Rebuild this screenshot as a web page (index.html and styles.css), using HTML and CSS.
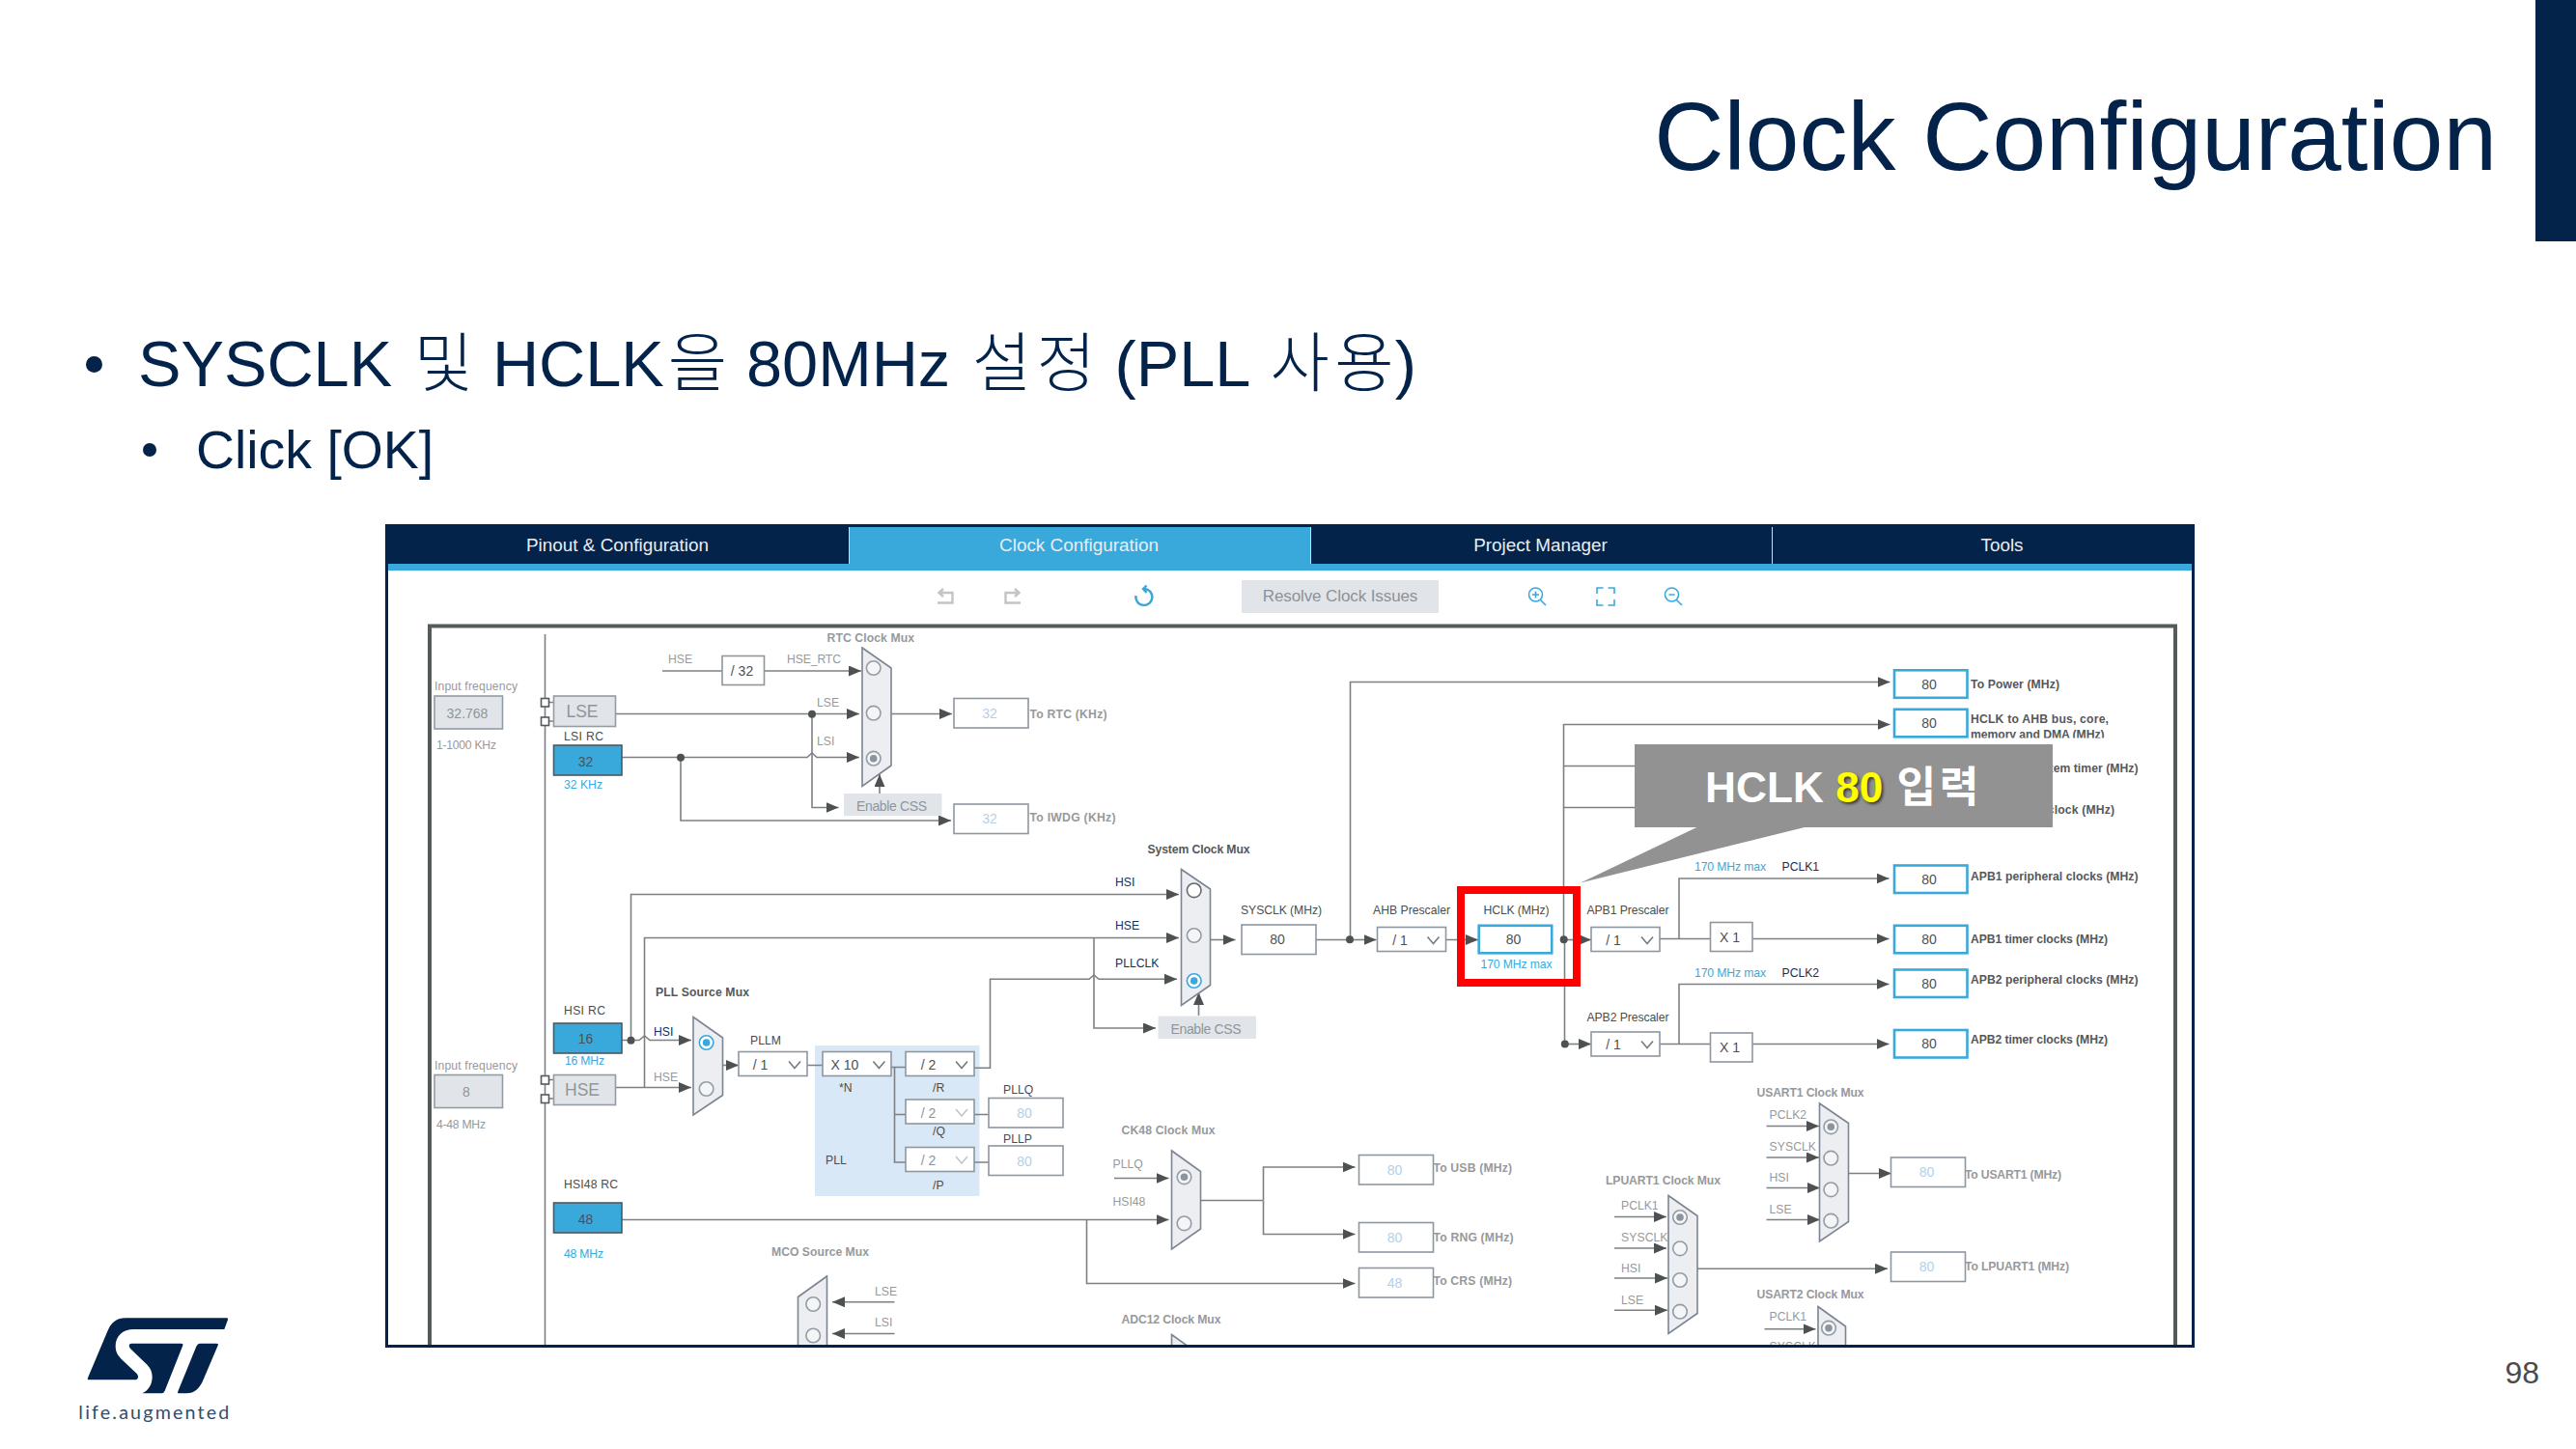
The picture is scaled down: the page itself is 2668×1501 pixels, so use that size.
FILE: index.html
```html
<!DOCTYPE html>
<html lang="ko">
<head>
    <meta charset="UTF-8">
    <meta name="viewport" content="width=device-width, initial-scale=1.0">
    <title>Clock Configuration</title>
    <link rel="stylesheet" href="styles.css">
</head>
<body>
    <header class="slide-header">
        <h1>Clock Configuration</h1>
        <div class="accent"></div>
    </header>

    <ul class="bullets">
        <li class="level1"><p>SYSCLK <span class="ko">및</span> HCLK<span class="ko">을</span> 80MHz <span class="ko">설정</span> (PLL <span class="ko">사용</span>)</p></li>
        <li class="level2"><p>Click [OK]</p></li>
    </ul>

    <main class="stage">
        <svg class="logo" viewBox="0 0 600 450">
            <path d="M93 259 L155 112 Q171 73 210 73 H525 Q530 73 528 78 L517 108 H236 C200 108 179 130 179 160 C179 182 188 192 203 206 L246 247 Q254 259 243 265 H97 Q90 265 93 259 Z"/>
            <path d="M228 152 H383 Q390 152 388 158 L332 299 Q329 307 321 307 H262 C282 298 293 279 293 256 C293 236 285 225 271 212 L225 168 Q216 154 228 152 Z"/>
            <path d="M441 152 H493 Q500 152 497 158 L452 264 C440 293 424 307 400 307 H376 Q370 307 373 301 L430 161 Q434 152 441 152 Z"/>
            <text x="64" y="387" textLength="468">life.augmented</text>
        </svg>

        <section class="panel">
            <nav class="tabs">
                <div class="tab">Pinout &amp; Configuration</div>
                <div class="tab active">Clock Configuration</div>
                <div class="tab">Project Manager</div>
                <div class="tab">Tools</div>
            </nav>

            <div class="toolbar">
                <svg class="icon undo" viewBox="0 0 20 20"><path d="M2 16.5H17.5V6H4M8 2L3.5 6L8 10"/></svg>
                <svg class="icon redo" viewBox="0 0 20 20"><path d="M18 16.5H2.5V6H16M12 2L16.5 6L12 10"/></svg>
                <svg class="icon refresh" viewBox="0 0 20 20"><path d="M9 2A8.5 8.5 0 1 1 1.5 9M12.5 -1.5L9 2L12.5 6"/></svg>
                <button class="resolve">Resolve Clock Issues</button>
                <svg class="icon zoom-in" viewBox="0 0 20 20"><circle cx="8.5" cy="8" r="7"/><path d="M13.5 13.5L19 19M5 8H12M8.5 4.5V11.5"/></svg>
                <svg class="icon fit" viewBox="0 0 20 20"><path d="M1 7V1H7.500M12.500 1H19V7M19 13V19H12.500M7.500 19H1V13"/></svg>
                <svg class="icon zoom-out" viewBox="0 0 20 20"><circle cx="8.500" cy="8" r="7"/><path d="M13.500 13.500L19 19M5.500 8H11.500"/></svg>
            </div>

            <svg class="clock-tree" viewBox="402 640 1868 753">
                <defs>
                    <marker id="arrow" viewBox="0 0 13 11" refX="13" refY="5.500" markerWidth="13" markerHeight="11" markerUnits="userSpaceOnUse" orient="auto">
                        <path class="head" d="M0 0L13 5.500L0 11Z"/>
                    </marker>
                    <g id="radio"><circle r="7.300"/></g>
                    <g id="radio-on"><circle r="7.300"/><circle class="core" r="3.800"/></g>
                    <path id="chevron" d="M-6 -3.500L0 3.500L6 -3.500"/>
                    <rect id="out" width="77" height="30.500"/>
                    <rect id="select" width="71" height="25"/>
                    <clipPath id="two-lines"><rect x="2038" y="730" width="160" height="34.500"/></clipPath>
                </defs>

                <path class="frame" d="M445 1400V648.500H2253V1400"/>
                <rect class="pll" x="844" y="1083" width="170.500" height="156"/>

                <!-- wires -->
                <g class="wire">
                    <path d="M564.500 657V1393M564 727.500H573M564 747H573M564 1118.500H573M564 1138H573"/>
                    <path d="M686 695H748M835.500 1103.500H852M922.500 1105.500H938M926.500 1105.500V1204H938M926.500 1154.500H938M1009 1154.500H1024M1009 1204H1024"/>
                    <path d="M1718.500 972.500H1771.500M1718.500 1081.500H1771.500M1363 973.500H1398M1243.500 1243.500H1308"/>
                    <path d="M1619.500 750V973M1620.500 973V1081M1619.500 793.500H1700M1619.500 836.500H1700"/>
                </g>
                <g class="wire ends">
                    <path d="M791.500 695H892"/>
                    <path d="M638 739.500H890"/>
                    <path d="M644 784.500H836L841 780L846 784.500H890"/>
                    <path d="M705 784.500V850H985"/>
                    <path d="M841 739.500V836.500H868.500"/>
                    <path d="M911 822V802"/>
                    <path d="M923 739.500H986"/>
                    <path d="M653.500 1077.500V926.500H1221"/>
                    <path d="M667.500 1126.500V971.500H1221"/>
                    <path d="M644 1077.500H662L667.500 1073L673 1077.500H716"/>
                    <path d="M638 1126.500H716"/>
                    <path d="M748.500 1103.500H765"/>
                    <path d="M1009 1106.300H1025.500V1014.300H1128L1133 1010L1138 1014.300H1219"/>
                    <path d="M1133 971.500V1065H1197"/>
                    <path d="M1241.500 1052V1028"/>
                    <path d="M1253.500 973.500H1279.500"/>
                    <path d="M1398 973.500H1425.500"/>
                    <path d="M1398.500 973.500V706.500H1957.500"/>
                    <path d="M1497.500 973.500H1531"/>
                    <path d="M1619.500 750.500H1957.500"/>
                    <path d="M1619.500 973.500H1648"/>
                    <path d="M1620.500 1081.500H1648"/>
                    <path d="M1739 972.500V910H1956.500"/>
                    <path d="M1815 972.500H1956.500"/>
                    <path d="M1739 1081.500V1019.500H1956.500"/>
                    <path d="M1815 1081.500H1956.500"/>
                    <path d="M644 1263.500H1210.500"/>
                    <path d="M1125.500 1263.500V1329.500H1403.500"/>
                    <path d="M1154 1220.500H1210.500"/>
                    <path d="M1308.500 1243.500V1209H1403.500"/>
                    <path d="M1308.500 1243.500V1278.500H1403.500"/>
                    <path d="M926.500 1348.700H862"/>
                    <path d="M926.500 1381.500H862"/>
                    <path d="M1829.500 1166.500H1884"/>
                    <path d="M1829.500 1199H1884"/>
                    <path d="M1829.500 1230.500H1885"/>
                    <path d="M1829.500 1263.500H1885"/>
                    <path d="M1914.500 1215.500H1959"/>
                    <path d="M1672 1260.500H1726"/>
                    <path d="M1672 1293H1726"/>
                    <path d="M1672 1324H1727"/>
                    <path d="M1672 1357.300H1727"/>
                    <path d="M1758 1314.300H1955"/>
                    <path d="M1827.500 1376.700H1880.500"/>
                </g>
                <g class="dot">
                    <circle cx="841" cy="739.700" r="4"/>
                    <circle cx="705" cy="784.700" r="4"/>
                    <circle cx="653.500" cy="1077.700" r="4"/>
                    <circle cx="1398" cy="973.300" r="4"/>
                    <circle cx="1619.700" cy="973.300" r="4"/>
                    <circle cx="1620.800" cy="1081.600" r="4"/>
                </g>

                <!-- multiplexers -->
                <g class="mux">
                    <path d="M893 671L923 692V793L893 814.500Z"/>
                    <path d="M718 1053.500L748.500 1075V1134.500L718 1155Z"/>
                    <path d="M1223.500 900.500L1253.500 921V1020.500L1223.500 1041.500Z"/>
                    <path d="M1213.500 1192L1243.500 1213.500V1273L1213.500 1294Z"/>
                    <path d="M856.500 1322L826.500 1343.500V1400H856.500Z"/>
                    <path d="M1213.500 1382.500L1243.500 1404H1213.500Z"/>
                    <path d="M1884.500 1143L1914.500 1163.500V1265.500L1884.500 1286Z"/>
                    <path d="M1728 1238.500L1758 1259.500V1360.500L1728 1381.500Z"/>
                    <path d="M1883 1353.500L1911.500 1374V1400H1883Z"/>
                </g>
                <g class="radio">
                    <use href="#radio" x="904.700" y="692"/>
                    <use href="#radio" x="904.700" y="738.700"/>
                    <use href="#radio-on" x="904.700" y="785.700"/>
                    <use href="#radio-on" x="731.600" y="1080" class="picked"/>
                    <use href="#radio" x="731.600" y="1128"/>
                    <use href="#radio" x="1236.700" y="922.300" class="open"/>
                    <use href="#radio" x="1236.700" y="969"/>
                    <use href="#radio-on" x="1236.700" y="1016" class="picked"/>
                    <use href="#radio-on" x="1226.500" y="1219.300"/>
                    <use href="#radio" x="1226.500" y="1267.300"/>
                    <use href="#radio" x="842.200" y="1351"/>
                    <use href="#radio" x="842.200" y="1383.500"/>
                    <use href="#radio-on" x="1896.300" y="1167.300"/>
                    <use href="#radio" x="1896.300" y="1199.700"/>
                    <use href="#radio" x="1896.300" y="1232.300"/>
                    <use href="#radio" x="1896.300" y="1264.700"/>
                    <use href="#radio-on" x="1740" y="1261"/>
                    <use href="#radio" x="1740" y="1293.300"/>
                    <use href="#radio" x="1740" y="1326"/>
                    <use href="#radio" x="1740" y="1358.700"/>
                    <use href="#radio-on" x="1894" y="1375.700"/>
                </g>

                <!-- sources -->
                <g class="grey-box">
                    <rect x="450" y="721" width="70.500" height="34"/>
                    <rect x="573.500" y="721" width="64" height="31.500"/>
                    <rect x="450" y="1113.500" width="70.500" height="34"/>
                    <rect x="573.500" y="1113.500" width="64" height="31"/>
                </g>
                <g class="css-button">
                    <rect x="874" y="822" width="101.500" height="23"/>
                    <rect x="1199.500" y="1052.500" width="101.500" height="23.500"/>
                </g>
                <g class="source">
                    <rect x="573.500" y="772" width="70.500" height="31"/>
                    <rect x="573.500" y="1060" width="70.500" height="31"/>
                    <rect x="573.500" y="1246" width="70.500" height="31"/>
                </g>
                <g class="pin">
                    <rect x="560.500" y="723.500" width="8" height="8.500"/>
                    <rect x="560.500" y="743" width="8" height="8.500"/>
                    <rect x="560.500" y="1114.500" width="8" height="8.500"/>
                    <rect x="560.500" y="1134" width="8" height="8.500"/>
                </g>

                <!-- value boxes and prescalers -->
                <g class="box">
                    <rect x="748" y="679.500" width="43.500" height="30"/>
                    <rect x="1771.500" y="955.500" width="43.500" height="30"/>
                    <rect x="1771.500" y="1070" width="43.500" height="30"/>
                    <use href="#out" x="988" y="723.500"/>
                    <use href="#out" x="988" y="833"/>
                    <use href="#out" x="1286" y="958"/>
                    <use href="#out" x="1024" y="1137.500"/>
                    <use href="#out" x="1024" y="1187"/>
                    <use href="#out" x="1407.500" y="1196.500"/>
                    <use href="#out" x="1407.500" y="1266.500"/>
                    <use href="#out" x="1407.500" y="1313.500"/>
                    <use href="#out" x="1958.500" y="1199"/>
                    <use href="#out" x="1958.500" y="1297"/>
                    <use href="#select" x="765" y="1089.500"/>
                    <use href="#select" x="852" y="1089.500"/>
                    <use href="#select" x="938" y="1089.500"/>
                    <use href="#select" x="938" y="1139"/>
                    <use href="#select" x="938" y="1188.500"/>
                    <use href="#select" x="1426.500" y="960.500"/>
                    <use href="#select" x="1648" y="960.500"/>
                    <use href="#select" x="1648" y="1069"/>
                </g>
                <g class="box live">
                    <rect x="1962" y="694.300" width="75.500" height="28.500"/>
                    <rect x="1962" y="734.800" width="75.500" height="28.500"/>
                    <rect x="1962" y="896.500" width="75.500" height="28.500"/>
                    <rect x="1962" y="958.800" width="75.500" height="28.500"/>
                    <rect x="1962" y="1004.500" width="75.500" height="28.500"/>
                    <rect x="1962" y="1067" width="75.500" height="28.500"/>
                    <rect x="1531.700" y="958.800" width="75.500" height="28.500"/>
                </g>
                <g class="chevron">
                    <use href="#chevron" x="823" y="1103"/>
                    <use href="#chevron" x="910.400" y="1103"/>
                    <use href="#chevron" x="996" y="1103"/>
                    <use href="#chevron" x="996" y="1152.500" class="off"/>
                    <use href="#chevron" x="996" y="1201.500" class="off"/>
                    <use href="#chevron" x="1484.500" y="974"/>
                    <use href="#chevron" x="1706" y="974"/>
                    <use href="#chevron" x="1706" y="1082"/>
                </g>

                <g class="value">
                    <text x="768.500" y="699.500">/ 32</text>
                    <text x="787.500" y="1108">/ 1</text>
                    <text x="875" y="1108">X 10</text>
                    <text x="961.500" y="1108">/ 2</text>
                    <text x="961.500" y="1158" class="off">/ 2</text>
                    <text x="961.500" y="1207.300" class="off">/ 2</text>
                    <text x="1450" y="979">/ 1</text>
                    <text x="1671" y="979">/ 1</text>
                    <text x="1671" y="1087.300">/ 1</text>
                    <text x="1791.500" y="975.500">X 1</text>
                    <text x="1791.500" y="1090">X 1</text>
                    <text x="606.500" y="793.500">32</text>
                    <text x="606.500" y="1081.300">16</text>
                    <text x="606.500" y="1267.500">48</text>
                    <text x="1323" y="978.300">80</text>
                    <text x="1567.500" y="978.300">80</text>
                    <text x="1998" y="713.700">80</text>
                    <text x="1998" y="754">80</text>
                    <text x="1998" y="915.700">80</text>
                    <text x="1998" y="978.300">80</text>
                    <text x="1998" y="1023.700">80</text>
                    <text x="1998" y="1086.300">80</text>
                </g>
                <g class="value grey">
                    <text x="484" y="744">32.768</text>
                    <text x="483" y="1135.700">8</text>
                    <text x="923.500" y="839.700" textLength="73">Enable CSS</text>
                    <text x="1249" y="1071" textLength="73">Enable CSS</text>
                    <text x="603" y="742.700" class="osc">LSE</text>
                    <text x="603" y="1135" class="osc">HSE</text>
                </g>
                <g class="value faint">
                    <text x="1025" y="743.700">32</text>
                    <text x="1025" y="853">32</text>
                    <text x="1061" y="1158">80</text>
                    <text x="1061" y="1207.500">80</text>
                    <text x="1444.500" y="1217">80</text>
                    <text x="1444.500" y="1287">80</text>
                    <text x="1444.500" y="1334">48</text>
                    <text x="1995.500" y="1219">80</text>
                    <text x="1995.500" y="1317">80</text>
                </g>

                <!-- labels -->
                <g class="label grey">
                    <text x="450" y="715" textLength="86">Input frequency</text>
                    <text x="452" y="776.300" textLength="62">1-1000 KHz</text>
                    <text x="450" y="1107.500" textLength="86">Input frequency</text>
                    <text x="452" y="1168.700" textLength="51">4-48 MHz</text>
                    <text x="692" y="686.500">HSE</text>
                    <text x="815" y="686.500" textLength="56">HSE_RTC</text>
                    <text x="846" y="732">LSE</text>
                    <text x="846" y="772.300">LSI</text>
                    <text x="677" y="1120">HSE</text>
                    <text x="906" y="1341.700">LSE</text>
                    <text x="906" y="1374.300">LSI</text>
                    <text x="1152.500" y="1209.500">PLLQ</text>
                    <text x="1152.500" y="1249">HSI48</text>
                    <text x="1832.500" y="1159.300">PCLK2</text>
                    <text x="1832.500" y="1192" textLength="48.500">SYSCLK</text>
                    <text x="1832.500" y="1224.300">HSI</text>
                    <text x="1832.500" y="1257">LSE</text>
                    <text x="1679" y="1253.300">PCLK1</text>
                    <text x="1679" y="1286" textLength="48.500">SYSCLK</text>
                    <text x="1679" y="1318.300">HSI</text>
                    <text x="1679" y="1351">LSE</text>
                    <text x="1832.500" y="1368">PCLK1</text>
                    <text x="1832.500" y="1399" textLength="48.500">SYSCLK</text>
                </g>
                <g class="label">
                    <text x="584" y="767" textLength="41">LSI RC</text>
                    <text x="584" y="1051.300" textLength="43">HSI RC</text>
                    <text x="584" y="1231" textLength="56">HSI48 RC</text>
                    <text x="777" y="1082.300">PLLM</text>
                    <text x="869" y="1130.700">*N</text>
                    <text x="966" y="1130.700">/R</text>
                    <text x="966" y="1176">/Q</text>
                    <text x="966" y="1232.300">/P</text>
                    <text x="855" y="1206">PLL</text>
                    <text x="1039" y="1133">PLLQ</text>
                    <text x="1039" y="1184">PLLP</text>
                    <text x="1285" y="946.700" textLength="84">SYSCLK (MHz)</text>
                    <text x="1422" y="946.700" textLength="80">AHB Prescaler</text>
                    <text x="1536.500" y="946.700" textLength="68">HCLK (MHz)</text>
                    <text x="1643.500" y="946.700" textLength="85">APB1 Prescaler</text>
                    <text x="1643.500" y="1057.500" textLength="85">APB2 Prescaler</text>
                </g>
                <g class="label navy">
                    <text x="677" y="1073">HSI</text>
                    <text x="1155" y="918">HSI</text>
                    <text x="1155" y="962.700">HSE</text>
                    <text x="1155" y="1001.700" textLength="45.500">PLLCLK</text>
                    <text x="1845.500" y="901.700">PCLK1</text>
                    <text x="1845.500" y="1012.300">PCLK2</text>
                </g>
                <g class="label blue">
                    <text x="584" y="816.500" textLength="40">32 KHz</text>
                    <text x="585" y="1103.300" textLength="41">16 MHz</text>
                    <text x="584" y="1302.500" textLength="41">48 MHz</text>
                    <text x="1533.500" y="1003.300" textLength="74">170 MHz max</text>
                    <text x="1755" y="901.700" textLength="74">170 MHz max</text>
                    <text x="1755" y="1012.300" textLength="74">170 MHz max</text>
                </g>
                <g class="label bold">
                    <text x="679" y="1031.700" textLength="97">PLL Source Mux</text>
                    <text x="1188.500" y="884.300" textLength="106">System Clock Mux</text>
                    <text x="2041" y="712.700" textLength="92">To Power (MHz)</text>
                    <g clip-path="url(#two-lines)">
                        <text x="2041" y="749" textLength="143">HCLK to AHB bus, core,</text>
                        <text x="2041" y="765" textLength="138.500">memory and DMA (MHz)</text>
                    </g>
                    <text x="2041" y="800" textLength="173.500">To Cortex System timer (MHz)</text>
                    <text x="2041" y="843" textLength="149">FCLK Cortex clock (MHz)</text>
                    <text x="2041" y="912" textLength="173.500">APB1 peripheral clocks (MHz)</text>
                    <text x="2041" y="977" textLength="142">APB1 timer clocks (MHz)</text>
                    <text x="2041" y="1019" textLength="173.500">APB2 peripheral clocks (MHz)</text>
                    <text x="2041" y="1081.300" textLength="142">APB2 timer clocks (MHz)</text>
                </g>
                <g class="label bold grey">
                    <text x="856.500" y="665" textLength="90.500">RTC Clock Mux</text>
                    <text x="1066.500" y="744" textLength="80">To RTC (KHz)</text>
                    <text x="1066.500" y="851" textLength="89">To IWDG (KHz)</text>
                    <text x="799" y="1301.300" textLength="101">MCO Source Mux</text>
                    <text x="1161.500" y="1175" textLength="97">CK48 Clock Mux</text>
                    <text x="1161.500" y="1370.700" textLength="103">ADC12 Clock Mux</text>
                    <text x="1484.500" y="1214" textLength="81.500">To USB (MHz)</text>
                    <text x="1484.500" y="1286" textLength="83">To RNG (MHz)</text>
                    <text x="1484.500" y="1331.300" textLength="81.500">To CRS (MHz)</text>
                    <text x="1819.500" y="1135.700" textLength="111">USART1 Clock Mux</text>
                    <text x="1663" y="1227" textLength="119">LPUART1 Clock Mux</text>
                    <text x="1819.500" y="1344.500" textLength="111">USART2 Clock Mux</text>
                    <text x="2035" y="1220.700" textLength="100">To USART1 (MHz)</text>
                    <text x="2035" y="1315.700" textLength="108">To LPUART1 (MHz)</text>
                </g>
            </svg>

            <div class="highlight"></div>
            <div class="callout">
                <p>HCLK <span class="hot">80</span> <span class="ko">입력</span></p>
                <svg class="callout-tail" viewBox="0 0 236 59"><path d="M122.500 0H236L0 58.500Z"/></svg>
            </div>
        </section>

        <div class="page-number">98</div>
    </main>
</body>
</html>
```

FILE: styles.css
```css
body {
    margin: 0;
    width: 2668px;
    height: 1501px;
    display: flex;
    flex-direction: column;
    overflow: hidden;
    background: #ffffff;
    color: #03234b;
    font-family: 'Liberation Sans', 'Noto Sans CJK KR', sans-serif;
}

p {
    margin: 0;
}

.slide-header {
    display: flex;
    justify-content: flex-end;
    gap: 40px;
    height: 250px;
}

.slide-header h1 {
    margin: 84px 0 0;
    font-size: 100px;
    font-weight: 400;
    line-height: 114px;
}

.accent {
    width: 42px;
    background: #03234b;
}

.bullets {
    height: 293px;
    margin: 0;
    padding: 0;
    list-style: none;
}

.bullets li {
    display: flex;
    align-items: center;
    white-space: nowrap;
}

.bullets li::before {
    content: "";
    border-radius: 50%;
    background: #03234b;
}

.level1 {
    height: 90px;
    padding: 82px 0 0 89px;
    font-size: 66.7px;
    line-height: 90px;
}

.level1::before {
    width: 17px;
    height: 17px;
    margin-right: 37px;
}

.level1 .ko {
    padding-left: 4px;
    margin-right: -4px;
    font-weight: 300;
    letter-spacing: 5.3px;
}

.level2 {
    height: 80px;
    padding: 4px 0 0 148px;
    font-size: 55.4px;
    line-height: 80px;
}

.level2::before {
    width: 14px;
    height: 14px;
    margin-right: 41px;
}

.stage {
    display: grid;
    grid-template-columns: 399px 1874px 1fr;
    height: 958px;
}

.logo {
    align-self: end;
    width: 200px;
    height: 150px;
    margin: 0 0 10px 60px;
    fill: #03234b;
}

.logo text {
    font-family: Lato, sans-serif;
    font-size: 59px;
    fill: #334d6e;
}

.page-number {
    align-self: end;
    justify-self: end;
    margin: 0 38px 61px 0;
    color: #4b4b4b;
    font-size: 32px;
    line-height: 36px;
}

.panel {
    position: relative;
    box-sizing: border-box;
    height: 853px;
    border: 3px solid #03234b;
    overflow: hidden;
}

.tabs {
    display: flex;
    height: 38px;
    background: #03234b;
    border-bottom: 7px solid #39a9dc;
}

.tab {
    flex: 0 0 478px;
    box-sizing: border-box;
    padding-right: 2px;
    border-right: 1px solid #d5dbe2;
    color: #e9edf2;
    font-size: 18.9px;
    line-height: 37px;
    text-align: center;
}

.tab.active {
    background: #39a9dc;
}

.toolbar {
    display: flex;
    align-items: center;
    height: 49px;
    padding: 4px 0 0 567px;
    box-sizing: border-box;
}

.icon {
    width: 20px;
    height: 20px;
    fill: none;
    stroke: #39a9dc;
    stroke-width: 1.6;
    overflow: visible;
}

.undo,
.redo {
    stroke: #c4c4c4;
    stroke-width: 2.4;
}

.redo {
    margin-left: 50px;
}

.refresh {
    margin-left: 116px;
    stroke-width: 2.4;
}

.resolve {
    width: 204px;
    height: 34px;
    margin: 0 92px 0 91px;
    padding: 0;
    border: none;
    background: #e1e5e9;
    color: #8d9298;
    font-family: inherit;
    font-size: 17px;
    letter-spacing: -0.1px;
}

.fit {
    margin-left: 51px;
}

.zoom-out {
    margin-left: 50px;
}

.clock-tree {
    display: block;
    width: 1868px;
    height: 753px;
}

.frame {
    fill: none;
    stroke: #555a5a;
    stroke-width: 4;
}

.pll {
    fill: #d9e8f6;
}

.wire {
    fill: none;
    stroke: #7d8082;
    stroke-width: 1.6;
}

.ends path {
    marker-end: url(#arrow);
}

.head,
.dot {
    fill: #4d5152;
    stroke: none;
}

.mux {
    fill: #eceef2;
    stroke: #7b8592;
    stroke-width: 1.6;
}

.radio {
    --core: #8c949d;
    fill: #f4f5f7;
    stroke: #949ca5;
    stroke-width: 1.6;
}

.radio .open {
    fill: #ffffff;
    stroke: #65696d;
}

.radio .picked {
    --core: #39a9dc;
    fill: #ffffff;
    stroke: #39a9dc;
}

.core {
    fill: var(--core);
    stroke: none;
}

.grey-box {
    fill: #e1e5e9;
    stroke: #939ba3;
    stroke-width: 1.6;
}

.css-button {
    fill: #e1e5e9;
}

.source {
    fill: #39a9dc;
    stroke: #4b5862;
    stroke-width: 1.6;
}

.pin {
    fill: #ffffff;
    stroke: #55595b;
    stroke-width: 1.6;
}

.box {
    fill: #ffffff;
    stroke: #8e969f;
    stroke-width: 1.6;
}

.box.live {
    stroke: #39a9dc;
    stroke-width: 2.6;
}

.chevron {
    fill: none;
    stroke: #777b7e;
    stroke-width: 1.6;
}

.chevron .off {
    stroke: #c2c5c8;
}

.value {
    fill: #4d5152;
    font-size: 14px;
    text-anchor: middle;
}

.value .off,
.value.grey {
    fill: #8f959b;
}

.value.faint {
    fill: #b3d0ea;
}

.value .osc {
    font-size: 17.5px;
}

.label {
    fill: #4a4d50;
    font-size: 12.2px;
}

.label.grey {
    fill: #97999b;
}

.label.navy {
    fill: #12305a;
}

.label.blue {
    fill: #39a9dc;
}

.label.bold {
    font-weight: 700;
    fill: #55585b;
}

.label.bold.grey {
    fill: #97999b;
}

.highlight {
    position: absolute;
    left: 1107px;
    top: 372px;
    width: 112px;
    height: 88px;
    border: 8px solid #ff0000;
}

.callout {
    position: absolute;
    left: 1291px;
    top: 225px;
    width: 433px;
    height: 86px;
    display: flex;
    align-items: center;
    justify-content: center;
    background: #929292;
    color: #ffffff;
    font-size: 44.2px;
    font-weight: 700;
    line-height: 86px;
    white-space: nowrap;
}

.callout p {
    padding-top: 3px;
}

.callout .hot {
    color: #ffff00;
    text-shadow: 2px 2px 3px rgba(0, 0, 0, 0.6);
}

.callout .ko {
    padding-left: 2px;
    letter-spacing: 3.5px;
}

.callout-tail {
    position: absolute;
    left: -56px;
    top: 85px;
    width: 236px;
    height: 59px;
    fill: #929292;
}
```
